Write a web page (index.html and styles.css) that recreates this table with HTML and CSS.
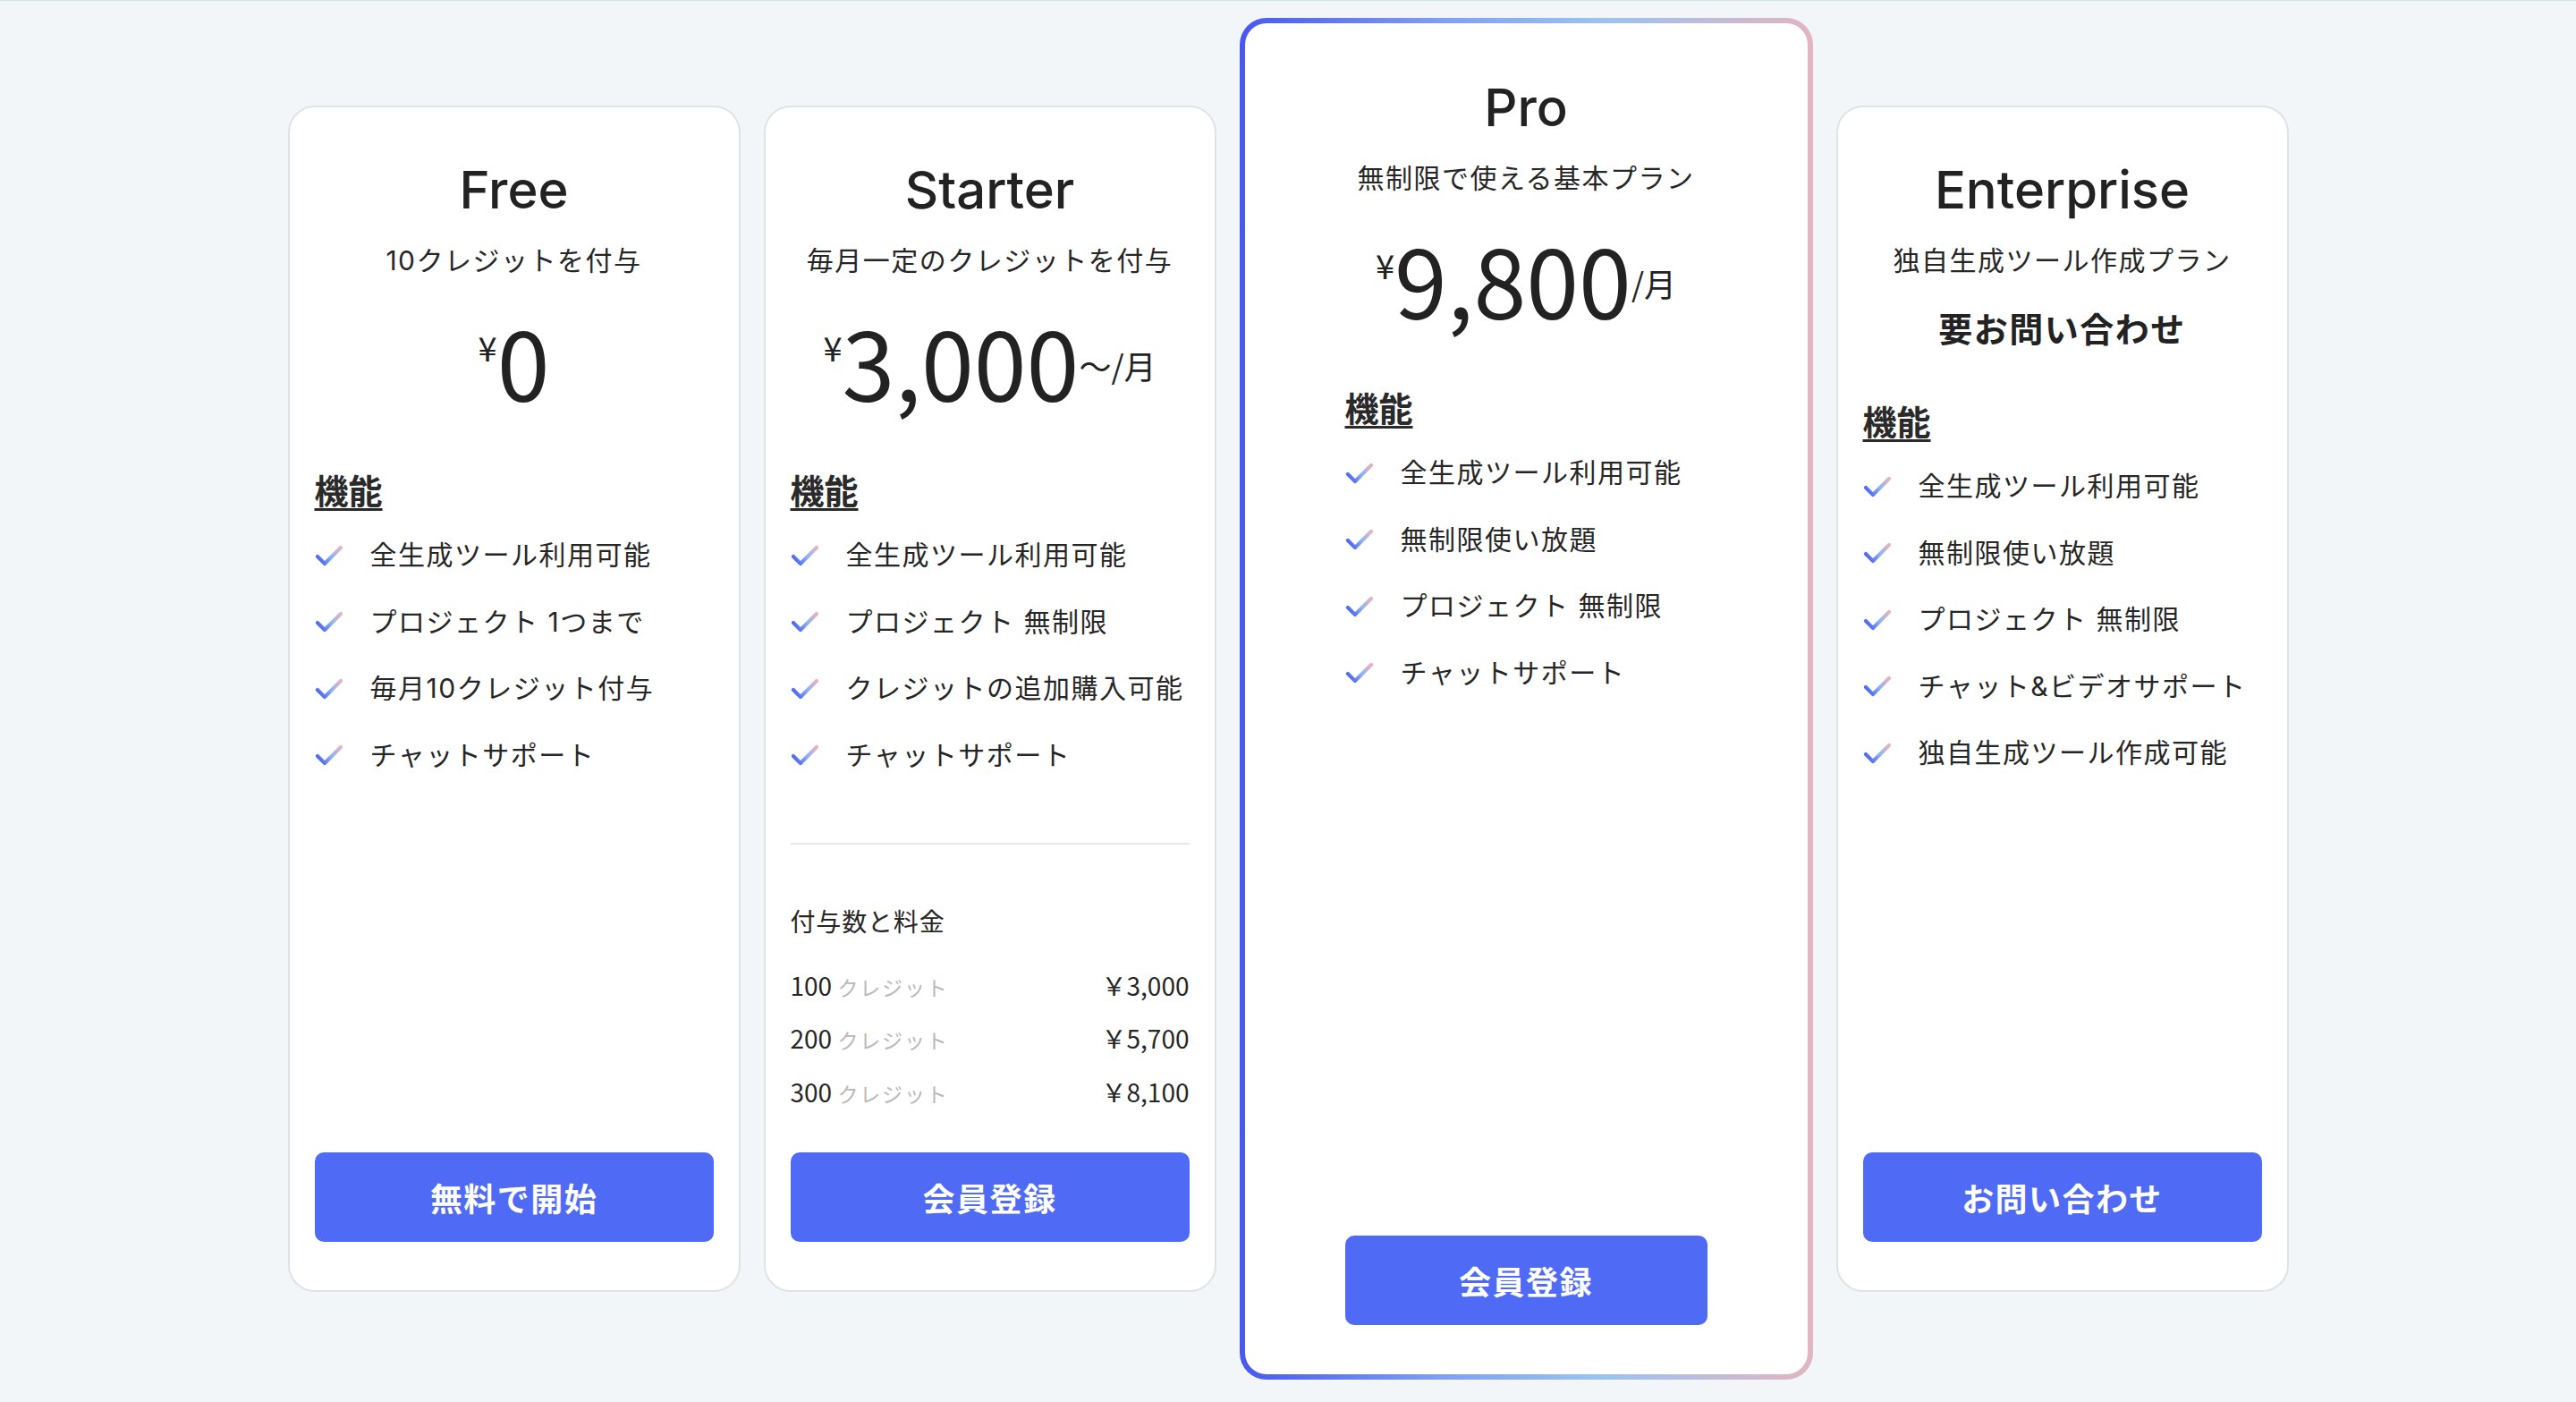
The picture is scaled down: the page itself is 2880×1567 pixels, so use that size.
FILE: index.html
```html
<!DOCTYPE html>
<html lang="ja">
<head>
  <meta charset="UTF-8">
  <meta name="viewport" content="width=device-width, initial-scale=1.0">
  <title>料金プラン</title>
  <link rel="stylesheet" href="styles.css">
</head>
<body>
  <svg width="0" height="0" class="defs">
    <defs>
      <linearGradient id="checkGrad" gradientUnits="userSpaceOnUse" x1="3" y1="22" x2="29" y2="4">
        <stop offset="0" stop-color="#3f55ee"/>
        <stop offset="0.55" stop-color="#8db5f3"/>
        <stop offset="1" stop-color="#eab3bf"/>
      </linearGradient>
    </defs>
  </svg>

  <div class="plans">
    <!-- Free -->
    <div class="card">
      <h2 class="plan-name">Free</h2>
      <p class="plan-desc">10クレジットを付与</p>
      <div class="price">
        <span class="yen">¥</span><span class="amount">0</span>
      </div>
      <h3 class="features-title">機能</h3>
      <ul class="features">
        <li><svg class="check" viewBox="0 0 32 26"><path d="M3 14 L11 22 L29 4"/></svg>全生成ツール利用可能</li>
        <li><svg class="check" viewBox="0 0 32 26"><path d="M3 14 L11 22 L29 4"/></svg>プロジェクト 1つまで</li>
        <li><svg class="check" viewBox="0 0 32 26"><path d="M3 14 L11 22 L29 4"/></svg>毎月10クレジット付与</li>
        <li><svg class="check" viewBox="0 0 32 26"><path d="M3 14 L11 22 L29 4"/></svg>チャットサポート</li>
      </ul>
      <button class="btn">無料で開始</button>
    </div>

    <!-- Starter -->
    <div class="card">
      <h2 class="plan-name">Starter</h2>
      <p class="plan-desc">毎月一定のクレジットを付与</p>
      <div class="price">
        <span class="yen">¥</span><span class="amount">3,000</span><span class="per">〜/月</span>
      </div>
      <h3 class="features-title">機能</h3>
      <ul class="features">
        <li><svg class="check" viewBox="0 0 32 26"><path d="M3 14 L11 22 L29 4"/></svg>全生成ツール利用可能</li>
        <li><svg class="check" viewBox="0 0 32 26"><path d="M3 14 L11 22 L29 4"/></svg>プロジェクト 無制限</li>
        <li><svg class="check" viewBox="0 0 32 26"><path d="M3 14 L11 22 L29 4"/></svg>クレジットの追加購入可能</li>
        <li><svg class="check" viewBox="0 0 32 26"><path d="M3 14 L11 22 L29 4"/></svg>チャットサポート</li>
      </ul>
      <div class="divider"></div>
      <p class="credits-title">付与数と料金</p>
      <div class="credit-list">
        <div class="credit-row"><span>100 <span class="unit">クレジット</span></span><span>￥3,000</span></div>
        <div class="credit-row"><span>200 <span class="unit">クレジット</span></span><span>￥5,700</span></div>
        <div class="credit-row"><span>300 <span class="unit">クレジット</span></span><span>￥8,100</span></div>
      </div>
      <button class="btn">会員登録</button>
    </div>

    <!-- Pro -->
    <div class="card card-pro">
      <h2 class="plan-name">Pro</h2>
      <p class="plan-desc">無制限で使える基本プラン</p>
      <div class="price">
        <span class="yen">¥</span><span class="amount">9,800</span><span class="per">/月</span>
      </div>
      <h3 class="features-title">機能</h3>
      <ul class="features">
        <li><svg class="check" viewBox="0 0 32 26"><path d="M3 14 L11 22 L29 4"/></svg>全生成ツール利用可能</li>
        <li><svg class="check" viewBox="0 0 32 26"><path d="M3 14 L11 22 L29 4"/></svg>無制限使い放題</li>
        <li><svg class="check" viewBox="0 0 32 26"><path d="M3 14 L11 22 L29 4"/></svg>プロジェクト 無制限</li>
        <li><svg class="check" viewBox="0 0 32 26"><path d="M3 14 L11 22 L29 4"/></svg>チャットサポート</li>
      </ul>
      <button class="btn">会員登録</button>
    </div>

    <!-- Enterprise -->
    <div class="card card-enterprise">
      <h2 class="plan-name">Enterprise</h2>
      <p class="plan-desc">独自生成ツール作成プラン</p>
      <p class="contact">要お問い合わせ</p>
      <h3 class="features-title">機能</h3>
      <ul class="features">
        <li><svg class="check" viewBox="0 0 32 26"><path d="M3 14 L11 22 L29 4"/></svg>全生成ツール利用可能</li>
        <li><svg class="check" viewBox="0 0 32 26"><path d="M3 14 L11 22 L29 4"/></svg>無制限使い放題</li>
        <li><svg class="check" viewBox="0 0 32 26"><path d="M3 14 L11 22 L29 4"/></svg>プロジェクト 無制限</li>
        <li><svg class="check" viewBox="0 0 32 26"><path d="M3 14 L11 22 L29 4"/></svg>チャット&amp;ビデオサポート</li>
        <li><svg class="check" viewBox="0 0 32 26"><path d="M3 14 L11 22 L29 4"/></svg>独自生成ツール作成可能</li>
      </ul>
      <button class="btn">お問い合わせ</button>
    </div>
  </div>
</body>
</html>
```

FILE: styles.css
```css
body {
  margin: 0;
  background-color: #f3f6f9;
  border-top: 1px solid #d6e3e6;
  font-family: "Inter", "Noto Sans CJK JP", sans-serif;
  color: #262626;
}

.defs {
  position: absolute;
}

/* featured plan spans the extra rows above and below */
.plans {
  display: grid;
  grid-template-columns: 506px 506px 641px 506px;
  grid-template-rows: 98px auto 98px;
  justify-content: center;
  column-gap: 26px;
  padding-top: 19px;
}

.card {
  grid-row: 2;
  box-sizing: border-box;
  background-color: #fff;
  border: 2px solid #dfe2e6;
  border-radius: 30px;
  padding: 57px 28px 54px;
  display: flex;
  flex-direction: column;
}

.card-pro {
  grid-row: 1 / 4;
  padding: 59px 112px 55px;
  border: 6px solid transparent;
  background:
    linear-gradient(#fff, #fff) padding-box,
    linear-gradient(90deg, #4858ee 0%, #7f9ff0 35%, #99c3f1 62%, #e2b5c0 100%) border-box;
}

.plan-name {
  margin: 0;
  font-size: 58px;
  font-weight: 500;
  line-height: 70px;
  text-align: center;
  color: #222;
}

.plan-desc {
  margin: 22px 0 0;
  font-size: 30px;
  line-height: 45px;
  letter-spacing: 0.05em;
  text-align: center;
}

.price {
  margin-top: 36px;
  display: flex;
  justify-content: center;
  font-family: "Noto Sans CJK JP", sans-serif;
  color: #222;
}

.price .yen {
  align-self: flex-start;
  margin-top: 19px;
  font-size: 38px;
  line-height: 1;
}

.price .amount {
  font-size: 106px;
  line-height: 1;
}

.price .per {
  align-self: center;
  margin-top: 10px;
  font-size: 36px;
  line-height: 1;
}

.contact {
  margin: 26px 0 0;
  font-size: 38px;
  font-weight: 700;
  line-height: 56px;
  letter-spacing: 0.04em;
  text-align: center;
  color: #222;
}

.features-title {
  margin: 66px 0 0;
  font-size: 38px;
  font-weight: 700;
  line-height: 54px;
  text-decoration: underline;
  text-decoration-thickness: 3px;
  text-underline-offset: 5px;
  color: #2a2a2a;
}

.card-enterprise .features-title {
  margin-top: 49px;
}

.features {
  list-style: none;
  margin: 22px 0 0;
  padding: 0;
  display: flex;
  flex-direction: column;
  gap: 29.5px;
}

.features li {
  display: flex;
  align-items: center;
  gap: 30px;
  font-size: 30px;
  line-height: 45px;
  letter-spacing: 0.05em;
}

.check {
  width: 32px;
  height: 26px;
  flex-shrink: 0;
  fill: none;
  stroke: url(#checkGrad);
  stroke-width: 4.2;
  stroke-linecap: round;
  stroke-linejoin: round;
}

.divider {
  margin-top: 75px;
  border-top: 2px solid #e6e8eb;
}

.credits-title {
  margin: 66px 0 0;
  font-size: 28px;
  line-height: 42px;
  letter-spacing: 0.03em;
}

.credit-list {
  margin: 28px 0 47px;
  display: flex;
  flex-direction: column;
  gap: 17.5px;
}

.credit-row {
  display: flex;
  justify-content: space-between;
  font-family: "Noto Sans CJK JP", sans-serif;
  font-size: 28px;
  line-height: 42px;
}

.unit {
  font-size: 23px;
  line-height: 1;
  letter-spacing: 0.08em;
  color: #b9b9b9;
}

.btn {
  display: block;
  width: 100%;
  height: 100px;
  margin-top: auto;
  border: none;
  border-radius: 10px;
  background-color: #4f6bf5;
  color: #fff;
  font-family: "Noto Sans CJK JP", sans-serif;
  font-size: 36px;
  font-weight: 700;
  letter-spacing: 0.04em;
  cursor: pointer;
}
```
